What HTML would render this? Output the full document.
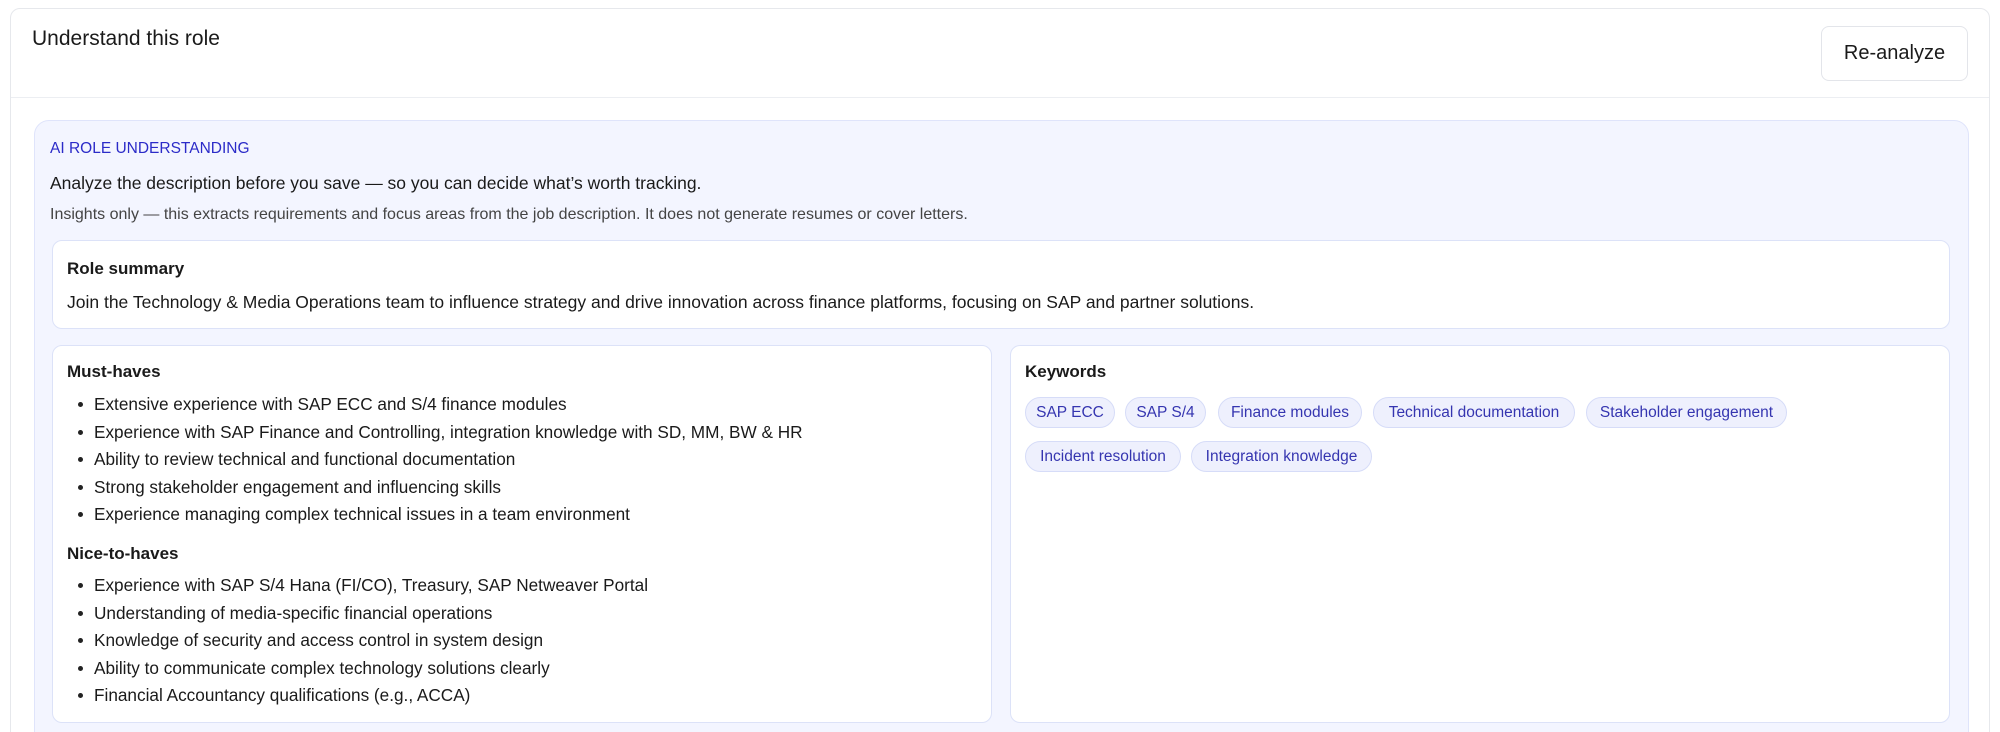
<!DOCTYPE html>
<html><head><meta charset="utf-8"><style>
*{box-sizing:border-box;margin:0;padding:0}
html,body{width:2000px;height:732px;overflow:hidden}
body{background:#fff;font-family:"Liberation Sans",sans-serif;color:#1a1a1a;position:relative}
.outer{position:absolute;left:10px;top:8px;width:1980px;height:740px;border:1px solid #e6e8ec;border-radius:10px;background:#fff;overflow:hidden}
.abs{position:absolute;white-space:nowrap}
.title{left:21px;top:18px;font-size:21px;font-weight:500}
.btn{left:1810px;top:17px;width:147px;height:55px;border:1px solid #e3e5ea;border-radius:8px;font-size:20px;display:flex;align-items:center;justify-content:center}
.div{position:absolute;left:0;right:0;top:88px;height:1px;background:#eceef2}
.panel{position:absolute;left:23px;top:111px;width:1935px;height:640px;background:#f3f5ff;border:1px solid #dfe4fb;border-radius:15px}
.card{position:absolute;background:#fff;border:1px solid #dce2f8;border-radius:10px}
.h{font-size:17px;font-weight:600}
ul{list-style:none}
li{position:relative;padding-left:27px;font-size:17.2px;height:27.5px;line-height:27.5px}
li:before{content:"";position:absolute;left:11px;top:11px;width:5px;height:5px;border-radius:50%;background:#222}
.chip{position:absolute;height:31px;border:1px solid #d6dcf8;background:#eef0fd;color:#3535b0;border-radius:16px;font-size:15.5px;display:flex;align-items:center;justify-content:center}
</style></head><body>
<div class="outer">
<div class="abs title">Understand this role</div>
<div class="abs btn">Re-analyze</div>
<div class="div"></div>
<div class="panel">
<div class="abs" style="left:15px;top:19px;font-size:15.5px;color:#2b2bc8">AI ROLE UNDERSTANDING</div>
<div class="abs" style="left:15px;top:52px;font-size:17.5px">Analyze the description before you save — so you can decide what’s worth tracking.</div>
<div class="abs" style="left:15px;top:85px;font-size:16px;color:#444">Insights only — this extracts requirements and focus areas from the job description. It does not generate resumes or cover letters.</div>
<div class="card" style="left:17px;top:119px;width:1898px;height:89px">
<div class="abs h" style="left:14px;top:18px">Role summary</div>
<div class="abs" style="left:14px;top:51px;font-size:17.5px">Join the Technology &amp; Media Operations team to influence strategy and drive innovation across finance platforms, focusing on SAP and partner solutions.</div>
</div>
<div class="card" style="left:17px;top:224px;width:940px;height:378px">
<div class="abs h" style="left:14px;top:16px">Must-haves</div>
<ul class="abs" style="left:14px;top:45px">
<li>Extensive experience with SAP ECC and S/4 finance modules</li>
<li>Experience with SAP Finance and Controlling, integration knowledge with SD, MM, BW &amp; HR</li>
<li>Ability to review technical and functional documentation</li>
<li>Strong stakeholder engagement and influencing skills</li>
<li>Experience managing complex technical issues in a team environment</li>
</ul>
<div class="abs h" style="left:14px;top:198px">Nice-to-haves</div>
<ul class="abs" style="left:14px;top:226px">
<li>Experience with SAP S/4 Hana (FI/CO), Treasury, SAP Netweaver Portal</li>
<li>Understanding of media-specific financial operations</li>
<li>Knowledge of security and access control in system design</li>
<li>Ability to communicate complex technology solutions clearly</li>
<li>Financial Accountancy qualifications (e.g., ACCA)</li>
</ul>
</div>
<div class="card" style="left:975px;top:224px;width:940px;height:378px">
<div class="abs h" style="left:14px;top:16px">Keywords</div>
<div class="chip" style="left:14px;top:51px;width:90px">SAP ECC</div>
<div class="chip" style="left:114px;top:51px;width:81px">SAP S/4</div>
<div class="chip" style="left:207px;top:51px;width:144px">Finance modules</div>
<div class="chip" style="left:362px;top:51px;width:202px">Technical documentation</div>
<div class="chip" style="left:575px;top:51px;width:201px">Stakeholder engagement</div>
<div class="chip" style="left:14px;top:95px;width:156px">Incident resolution</div>
<div class="chip" style="left:180px;top:95px;width:181px">Integration knowledge</div>
</div>
</div>
</div>
</body></html>
